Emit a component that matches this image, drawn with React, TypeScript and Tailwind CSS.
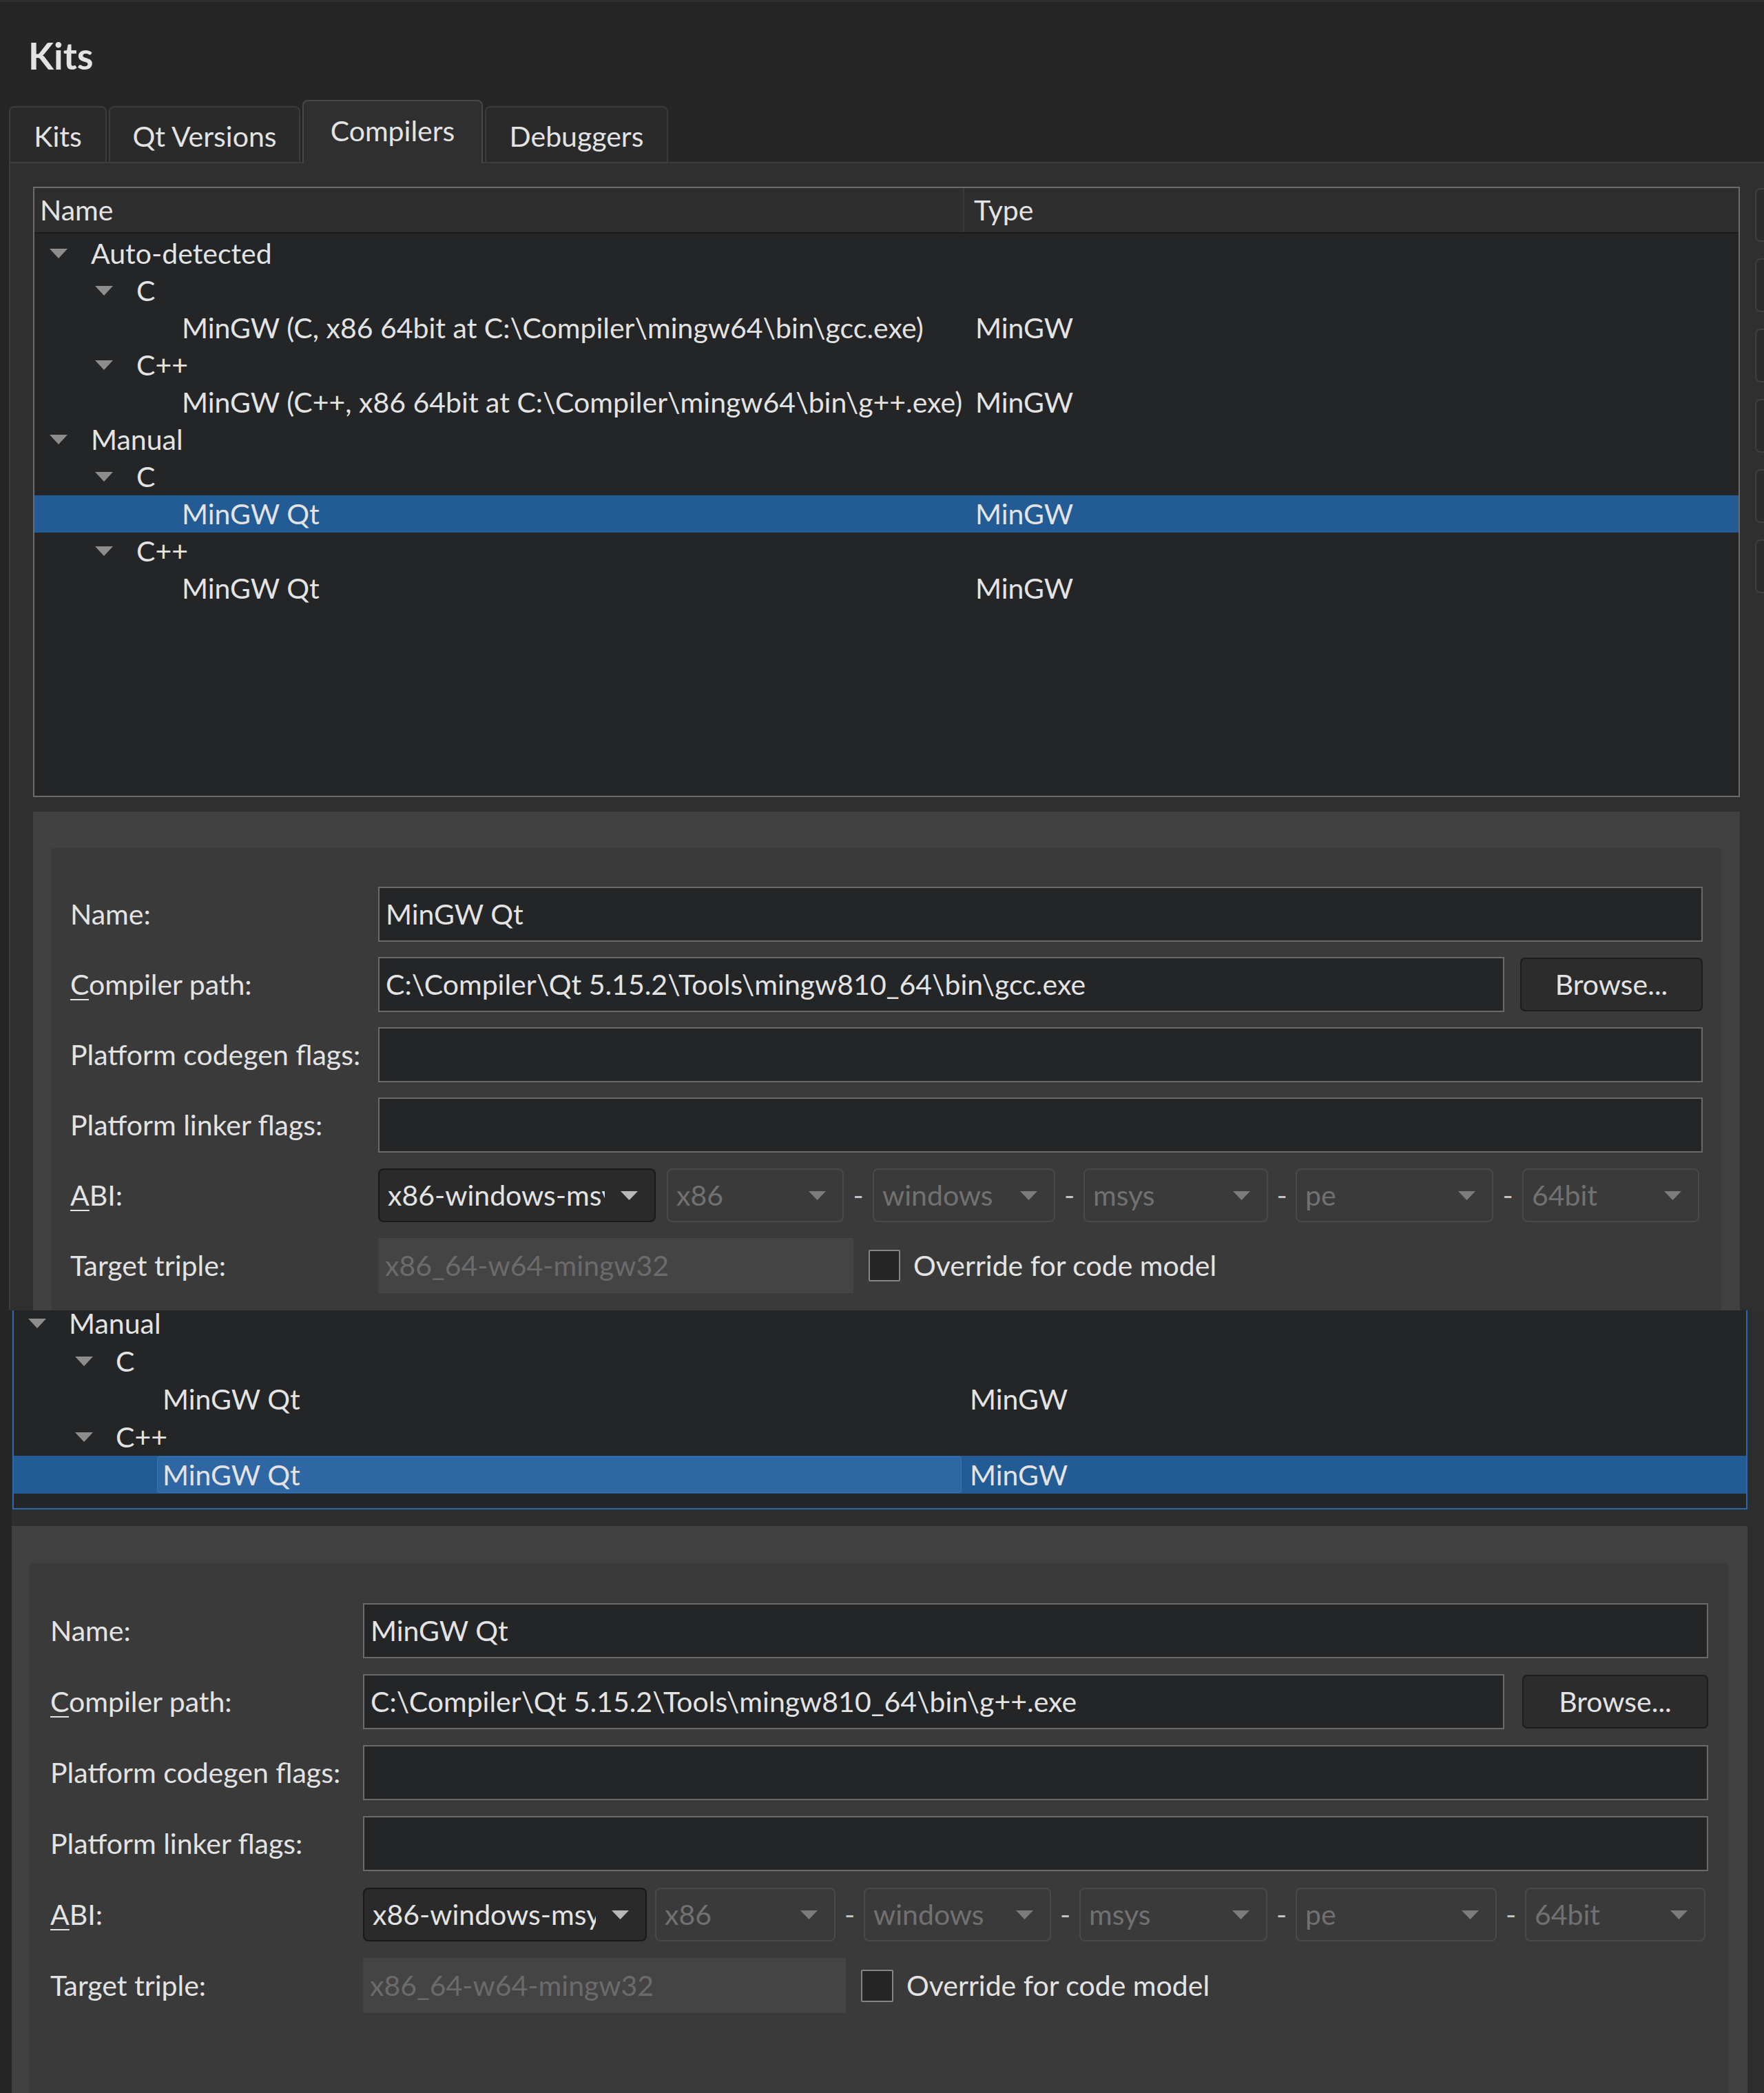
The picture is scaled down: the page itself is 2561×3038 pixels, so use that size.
import React from "react";

type TreeRow = { level: 0 | 1 | 2; name: string; type?: string; selected?: boolean };

const topRows: TreeRow[] = [
  { level: 0, name: "Auto-detected" },
  { level: 1, name: "C" },
  { level: 2, name: "MinGW (C, x86 64bit at C:\\Compiler\\mingw64\\bin\\gcc.exe)", type: "MinGW" },
  { level: 1, name: "C++" },
  { level: 2, name: "MinGW (C++, x86 64bit at C:\\Compiler\\mingw64\\bin\\g++.exe)", type: "MinGW" },
  { level: 0, name: "Manual" },
  { level: 1, name: "C" },
  { level: 2, name: "MinGW Qt", type: "MinGW", selected: true },
  { level: 1, name: "C++" },
  { level: 2, name: "MinGW Qt", type: "MinGW" },
];

const bottomRows: TreeRow[] = [
  { level: 0, name: "Manual" },
  { level: 1, name: "C" },
  { level: 2, name: "MinGW Qt", type: "MinGW" },
  { level: 1, name: "C++" },
  { level: 2, name: "MinGW Qt", type: "MinGW", selected: true },
];

const topIndent = ["pl-[22px]", "pl-[88px]", "pl-[154px]"];
const bottomIndent = ["pl-[21px]", "pl-[89px]", "pl-[157px]"];

function Caret({ w = 26, h = 14, className = "" }: { w?: number; h?: number; className?: string }) {
  return (
    <svg width={w} height={h} viewBox={`0 0 ${w} ${h}`} className={className}>
      <polygon points={`0,0 ${w},0 ${w / 2},${h}`} fill="currentColor" />
    </svg>
  );
}

function TopTree() {
  return (
    <div className="flex h-[886px] w-[2478px] shrink-0 flex-col border-2 border-[#6b6b6b] bg-[#242527]">
      <div className="flex h-[66px] shrink-0 items-center border-b-2 border-[#1b1b1b] bg-[#2e2e2e]">
        <div className="flex h-full w-[1350px] items-center border-r-2 border-[#3a3a3a] pl-[8px]">Name</div>
        <div className="pl-[14px]">Type</div>
      </div>
      <div className="pt-[2px]">
        {topRows.map((r, i) => (
          <div key={i} className={`flex h-[54px] items-center ${r.selected ? "bg-[#235b95]" : ""}`}>
            <div className={`flex w-[1350px] items-center whitespace-nowrap ${topIndent[r.level]}`}>
              <div className="flex w-[60px] shrink-0 items-center">
                {r.level < 2 && <Caret className="text-[#8d8d8d]" />}
              </div>
              <span>{r.name}</span>
            </div>
            <div className="pl-[16px]">{r.type}</div>
          </div>
        ))}
      </div>
    </div>
  );
}

function BottomTree() {
  return (
    <div className="ml-[1px] h-[289px] w-[2519px] shrink-0 overflow-hidden border-x-2 border-b-2 border-[#2b67ad] bg-[#242527]">
      <div className="-mt-[9px]">
        {bottomRows.map((r, i) =>
          r.selected ? (
            <div key={i} className="flex h-[55px] items-stretch bg-[#235b95] py-[1px]">
              <div className="flex w-[1376px] pl-[157px]">
                <div className="w-[51px] shrink-0" />
                <div className="flex flex-1 items-center rounded-[3px] border border-[#3b74b3] bg-[#2f67a5] pl-[7px]">
                  MinGW Qt
                </div>
              </div>
              <div className="flex items-center pl-[12px]">{r.type}</div>
            </div>
          ) : (
            <div key={i} className="flex h-[55px] items-center">
              <div className={`flex w-[1376px] items-center whitespace-nowrap ${bottomIndent[r.level]}`}>
                <div className="flex w-[59px] shrink-0 items-center">
                  {r.level < 2 && <Caret className="text-[#8d8d8d]" />}
                </div>
                <span>{r.name}</span>
              </div>
              <div className="pl-[12px]">{r.type}</div>
            </div>
          )
        )}
      </div>
    </div>
  );
}

type Geom = {
  outer: string;
  inner: string;
  label: string;
  browse: string;
  combos: string[];
  firstGap: string;
  dashes: string[];
  triple: string;
  check: string;
};

const topGeom: Geom = {
  outer: "w-[2478px] pt-[53px] px-[27px]",
  inner: "pt-[56px] pl-[27px] pr-[27px] gap-[22px]",
  label: "w-[447px]",
  browse: "w-[265px] ml-[23px]",
  combos: ["w-[403px]", "w-[257px]", "w-[265px]", "w-[268px]", "w-[287px]", "w-[257px]"],
  firstGap: "w-[16px]",
  dashes: ["w-[42px]", "w-[41px]", "w-[40px]", "w-[42px]"],
  triple: "w-[690px]",
  check: "ml-[22px] h-[46px] w-[46px]",
};

const bottomGeom: Geom = {
  outer: "w-[2520px] pt-[54px] pl-[26px] pr-[28px]",
  inner: "pt-[58px] pl-[30px] pr-[29px] gap-[23px]",
  label: "w-[454px]",
  browse: "w-[270px] ml-[26px]",
  combos: ["w-[412px]", "w-[262px]", "w-[272px]", "w-[273px]", "w-[292px]", "w-[262px]"],
  firstGap: "w-[12px]",
  dashes: ["w-[41px]", "w-[41px]", "w-[41px]", "w-[41px]"],
  triple: "w-[701px]",
  check: "ml-[22px] h-[47px] w-[47px]",
};

function Field({ value }: { value?: string }) {
  return (
    <div className="flex h-[80px] flex-1 items-center whitespace-nowrap border-2 border-[#6a6a6a] bg-[#242527] pl-[9px]">
      {value}
    </div>
  );
}

function Combo({ w, text, enabled }: { w: string; text: string; enabled?: boolean }) {
  return (
    <div
      className={`flex h-[78px] shrink-0 items-center rounded-[8px] border-2 pl-[12px] pr-[24px] ${w} ${
        enabled ? "border-[#191919] bg-[#2a2a2a]" : "border-[#4a4a4a] bg-[#3a3a3a] text-[#717171]"
      }`}
    >
      <div className="mr-[23px] min-w-0 flex-1 overflow-hidden whitespace-nowrap">{text}</div>
      <Caret w={25} h={13} className={enabled ? "shrink-0 text-[#b8b8b8]" : "shrink-0 text-[#7c7c7c]"} />
    </div>
  );
}

function Row({ g, label, children }: { g: Geom; label: React.ReactNode; children: React.ReactNode }) {
  return (
    <div className="flex h-[80px] shrink-0 items-center">
      <div className={`${g.label} shrink-0 whitespace-nowrap`}>{label}</div>
      <div className="flex h-full flex-1 items-center">{children}</div>
    </div>
  );
}

function Details({ g, path }: { g: Geom; path: string }) {
  const abi = ["x86", "windows", "msys", "pe", "64bit"];
  return (
    <div className={`shrink-0 bg-[#414141] ${g.outer}`}>
      <div className={`flex h-[1200px] flex-col bg-[#3a3a3a] ${g.inner}`}>
        <Row g={g} label="Name:">
          <Field value="MinGW Qt" />
        </Row>
        <Row
          g={g}
          label={
            <>
              <span className="underline decoration-2 underline-offset-[6px]">C</span>ompiler path:
            </>
          }
        >
          <Field value={path} />
          <div
            className={`flex h-[78px] shrink-0 items-center justify-center rounded-[7px] border-2 border-[#1c1c1c] bg-[#2c2c2c] ${g.browse}`}
          >
            Browse...
          </div>
        </Row>
        <Row g={g} label="Platform codegen flags:">
          <Field />
        </Row>
        <Row g={g} label="Platform linker flags:">
          <Field />
        </Row>
        <Row
          g={g}
          label={
            <>
              <span className="underline decoration-2 underline-offset-[6px]">A</span>BI:
            </>
          }
        >
          <div className="flex h-full items-center">
            <Combo w={g.combos[0]} text="x86-windows-msys-pe-64bit" enabled />
            <div className={`${g.firstGap} shrink-0`} />
            {abi.map((a, i) => (
              <React.Fragment key={a}>
                {i > 0 && <div className={`${g.dashes[i - 1]} shrink-0 text-center text-[#c4c4c4]`}>-</div>}
                <Combo w={g.combos[i + 1]} text={a} />
              </React.Fragment>
            ))}
          </div>
        </Row>
        <Row g={g} label="Target triple:">
          <div className={`flex h-[80px] shrink-0 items-center bg-[#444444] pl-[10px] text-[#6b6b6b] ${g.triple}`}>
            x86_64-w64-mingw32
          </div>
          <div className={`shrink-0 rounded-[2px] border-2 border-[#858585] bg-[#262626] ${g.check}`} />
          <span className="ml-[19px] whitespace-nowrap">Override for code model</span>
        </Row>
      </div>
    </div>
  );
}

function Tab({ label, w, active }: { label: string; w: string; active?: boolean }) {
  return (
    <div
      className={`flex shrink-0 items-center justify-center rounded-t-[8px] border-2 border-b-0 ${w} ${
        active
          ? "relative z-10 -mb-[2px] h-[92px] border-[#484848] bg-[#2f2f2f] pb-[4px]"
          : "h-[81px] border-[#3b3b3b] bg-[#2a2a2a] pt-[4px]"
      }`}
    >
      {label}
    </div>
  );
}

export default function App() {
  return (
    <div className="w-[2561px] overflow-hidden bg-[#262626] font-['Lato',sans-serif] text-[41px] leading-[1.25] text-[#e3e3e3]">
      {/* first capture */}
      <div className="flex h-[1902px] flex-col overflow-hidden">
        <div className="h-[3px] shrink-0 bg-[#2f2f2f]" />
        <div className="h-[142px] shrink-0 pl-[41px] pt-[51px] text-[54px] font-bold leading-none">Kits</div>
        <div className="flex shrink-0 items-end gap-[3px] pl-[13px]">
          <Tab label="Kits" w="w-[142px]" />
          <Tab label="Qt Versions" w="w-[278px]" />
          <Tab label="Compilers" w="w-[262px]" active />
          <Tab label="Debuggers" w="w-[266px]" />
        </div>
        <div className="ml-[13px] flex flex-1 gap-[22px] border-l-2 border-t-2 border-[#3d3d3d] bg-[#2f2f2f] pl-[33px] pt-[34px]">
          <div className="flex shrink-0 flex-col gap-[21px]">
            <TopTree />
            <Details g={topGeom} path={"C:\\Compiler\\Qt 5.15.2\\Tools\\mingw810_64\\bin\\gcc.exe"} />
          </div>
          <div className="flex w-[300px] shrink-0 flex-col gap-[24px] pt-[2px]">
            {[0, 1, 2, 3, 4, 5].map((i) => (
              <div key={i} className="h-[78px] shrink-0 rounded-[8px] border-2 border-[#3f3f3f] bg-[#2b2b2b]" />
            ))}
          </div>
        </div>
      </div>

      {/* second capture */}
      <div className="h-[1136px] overflow-hidden pl-[17px]">
        <div className="flex h-full flex-col gap-[24px] bg-[#2e2e2e]">
          <BottomTree />
          <Details g={bottomGeom} path={"C:\\Compiler\\Qt 5.15.2\\Tools\\mingw810_64\\bin\\g++.exe"} />
        </div>
      </div>
    </div>
  );
}
